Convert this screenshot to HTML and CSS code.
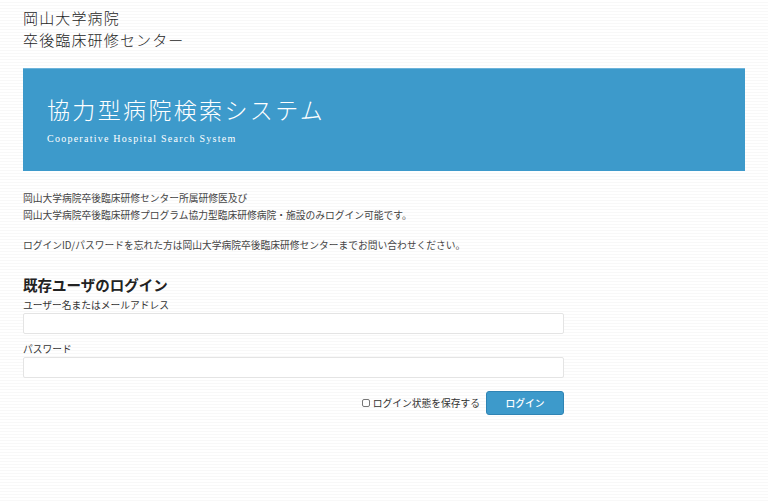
FILE: index.html
```html
<!DOCTYPE html>
<html lang="ja">
<head>
<meta charset="utf-8">
<title>協力型病院検索システム</title>
<link rel="stylesheet" href="styles.css">
</head>
<body>
<div class="page">
  <header class="site-header">
    <div class="org">岡山大学病院</div>
    <div class="org">卒後臨床研修センター</div>
  </header>
  <section class="banner">
    <h1 class="banner-title">協力型病院検索システム</h1>
    <p class="banner-sub">Cooperative Hospital Search System</p>
  </section>
  <div class="intro">
    <p>岡山大学病院卒後臨床研修センター所属研修医及び<br>岡山大学病院卒後臨床研修プログラム協力型臨床研修病院・施設のみログイン可能です。</p>
    <p>ログインID/パスワードを忘れた方は岡山大学病院卒後臨床研修センターまでお問い合わせください。</p>
  </div>
  <form class="login">
    <h2 class="login-title">既存ユーザのログイン</h2>
    <label class="field-label" for="user">ユーザー名またはメールアドレス</label>
    <input class="field" id="user" type="text">
    <label class="field-label second" for="pass">パスワード</label>
    <input class="field" id="pass" type="password">
    <div class="actions">
      <label class="remember"><input class="check" type="checkbox">ログイン状態を保存する</label>
      <button class="btn" type="button">ログイン</button>
    </div>
  </form>
</div>
</body>
</html>
```
FILE: styles.css
```css
html, body {
  margin: 0;
  padding: 0;
}
body {
  background: repeating-linear-gradient(to bottom, #ffffff 0, #ffffff 2px, #f8f8f8 2px, #f8f8f8 3px);
  font-family: "Noto Sans CJK JP", "Noto Sans", sans-serif;
  color: #333;
  height: 503px;
}
.page {
  padding: 7px 23px 0 23px;
}
.site-header {
  color: #1e1e1e;
  font-weight: 300;
  font-size: 15px;
  line-height: 22px;
  letter-spacing: 1.15px;
}
.banner {
  margin-top: 17px;
  width: 722px;
  height: 103px;
  box-sizing: border-box;
  background: #3d9acb;
  border-top: 1px solid #6cb3da;
  padding: 26px 0 0 24px;
  color: #fff;
}
.banner-title {
  margin: 0;
  font-weight: 300;
  font-size: 23px;
  line-height: 28px;
  letter-spacing: 2.35px;
}
.banner-sub {
  margin: 9px 0 0 0;
  font-family: "Liberation Serif", serif;
  font-size: 10px;
  line-height: 14px;
  letter-spacing: 1.25px;
}
.intro {
  margin-top: 19px;
  font-size: 9.75px;
  line-height: 16.5px;
  color: #444;
}
.intro p {
  margin: 0 0 13.5px 0;
}
.login {
  width: 541px;
  display: flex;
  flex-direction: column;
}
.login-title {
  margin: 8px 0 0 0;
  font-size: 14.5px;
  line-height: 20px;
  font-weight: 700;
  color: #222;
}
.field-label {
  margin-top: 3px;
  font-size: 9.75px;
  line-height: 14px;
  color: #333;
}
.field-label.second {
  margin-top: 8px;
}
.field {
  margin: 1px 0 0 0;
  height: 21px;
  box-sizing: border-box;
  border: 1px solid #e4e4e4;
  border-radius: 2px;
  background: #fff;
  padding: 0 4px;
  font-size: 10px;
}
.actions {
  margin-top: 13px;
  display: flex;
  justify-content: flex-end;
  align-items: center;
  gap: 6px;
}
.remember {
  display: flex;
  align-items: center;
  font-size: 9.75px;
  color: #333;
  line-height: 14px;
}
.check {
  appearance: none;
  -webkit-appearance: none;
  width: 8px;
  height: 8px;
  margin: 0 3px 0 0;
  border: 1px solid #777;
  border-radius: 2px;
  background: #fff;
}
.btn {
  width: 78px;
  height: 24px;
  box-sizing: border-box;
  background: #3d9acb;
  border: 1px solid #2f84b4;
  border-radius: 3px;
  color: #fff;
  font-family: "Noto Sans CJK JP", "Noto Sans", sans-serif;
  font-size: 9.75px;
  font-weight: 500;
  padding: 0;
}
```
